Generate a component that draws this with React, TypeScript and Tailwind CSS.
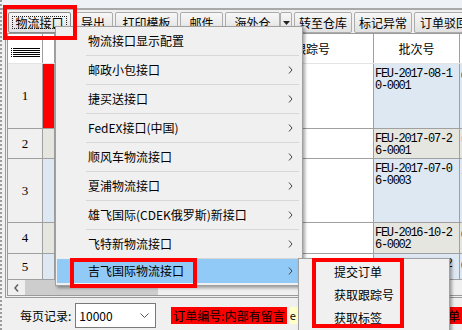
import React from "react";

const menuItems = [
  "物流接口显示配置",
  "邮政小包接口",
  "捷买送接口",
  "FedEX接口(中国)",
  "顺风车物流接口",
  "夏浦物流接口",
  "雄飞国际(CDEK俄罗斯)新接口",
  "飞特新物流接口",
  "吉飞国际物流接口",
];

const rows = [
  { n: 1, h: "h-[65px]", flag: "bg-[#ff0000]", tint: "bg-[#dde8f3]", batch: "FEU-2017-08-10-0001", extra: "0" },
  { n: 2, h: "h-[30px]", flag: "bg-[#e6e6e0]", tint: "bg-[#e6e6e0]", batch: "FEU-2017-07-26-0001", extra: "中" },
  { n: 3, h: "h-[64px]", flag: "bg-[#dde8f3]", tint: "bg-[#dde8f3]", batch: "FEU-2017-07-06-0003", extra: "1" },
  { n: 4, h: "h-[31px]", flag: "bg-[#e6e6e0]", tint: "bg-[#e6e6e0]", batch: "FEU-2016-10-26-0002", extra: "0" },
  { n: 5, h: "h-[26px]", flag: "bg-[#dde8f3]", tint: "bg-[#dde8f3]", batch: "FEU-2016-09-22-0001", extra: "0" },
];

function ChevronRight() {
  return (
    <svg width="5" height="8" viewBox="0 0 5 8" className="shrink-0">
      <path d="M1 0.5L4 4L1 7.5" stroke="#444" fill="none" strokeWidth="1" />
    </svg>
  );
}

function Btn({ w, children, focus }: { w: string; children: React.ReactNode; focus?: boolean }) {
  return (
    <div
      className={`${w} h-[21px] shrink-0 rounded-[2px] border ${
        focus ? "border-[#8a8a8a] p-[3px]" : "border-[#acacac]"
      } bg-linear-to-b from-[#f7f7f7] to-[#e1e1e1] flex items-center justify-center text-[12px] leading-none whitespace-nowrap overflow-hidden`}
    >
      {focus ? (
        <span className="flex-1 h-full border border-dotted border-[#222] flex items-center justify-center">
          {children}
        </span>
      ) : (
        children
      )}
    </div>
  );
}

function LinesIcon() {
  return (
    <svg width="31" height="10" viewBox="0 0 31 10">
      {[0.5, 2.5, 4.5, 6.5, 8.5].map((y) => (
        <g key={y}>
          <rect x="0" y={y - 0.5} width="1" height="1" fill="#000" />
          <line x1="2" y1={y} x2="29" y2={y} stroke="#000" strokeWidth="1" />
        </g>
      ))}
    </svg>
  );
}

export default function App() {
  return (
    <div className="relative w-[462px] h-[330px] overflow-hidden bg-[#f0f0f0] border-l-2 border-dotted border-[#9c9c9c] font-['Noto_Sans_CJK_SC','Noto_Sans',sans-serif] text-black">
      {/* top strip */}
      <div className="h-[10px] border-b-2 border-[#a9a9a9] bg-[#eef1f6]" />

      {/* toolbar */}
      <div className="h-[23px] flex items-start pt-[2px] pl-[6px] gap-[2px]">
        <Btn w="w-[63px]" focus>
          物流接口
        </Btn>
        <Btn w="w-[40px]">导出</Btn>
        <Btn w="w-[63px]">打印模板</Btn>
        <Btn w="w-[43px]">邮件</Btn>
        <div className="flex">
          <Btn w="w-[55px]">海外仓</Btn>
          <Btn w="w-[12px]">
            <svg width="7" height="4" viewBox="0 0 7 4">
              <path d="M0 0H7L3.5 4Z" fill="#222" />
            </svg>
          </Btn>
        </div>
        <Btn w="w-[58px]">转至仓库</Btn>
        <Btn w="w-[58px]">标记异常</Btn>
        <Btn w="w-[60px]">订单驳回</Btn>
      </div>

      {/* table frame */}
      <div className="ml-[3px] border-l-[3px] border-b-[3px] border-t border-double border-[#9a9a9a] overflow-hidden">
        {/* header */}
        <div className="flex h-[30px] border-b border-[#e4e4e4] bg-white text-[12px] leading-none">
          <div className="w-[35px] shrink-0 border-r border-[#a0a0a0] pl-[3px] pt-[14px]">
            <LinesIcon />
          </div>
          <div className="w-[12px] shrink-0 border-r border-[#a0a0a0]" />
          <div className="w-[196px] shrink-0 border-r border-[#a0a0a0]" />
          <div className="w-[123px] shrink-0 border-r border-[#a0a0a0] flex items-center justify-center">
            跟踪号
          </div>
          <div className="w-[86px] shrink-0 border-r border-[#a0a0a0] flex items-center justify-center">
            批次号
          </div>
          <div className="w-[40px] shrink-0" />
        </div>

        {rows.map((r) => (
          <div key={r.n} className={`flex ${r.h} border-b border-[#a0a0a0]`}>
            <div className="w-[35px] shrink-0 border-r border-[#a0a0a0] flex items-center justify-center font-['Liberation_Serif',serif] text-[13px]">
              {r.n}
            </div>
            <div className={`w-[12px] shrink-0 border-r border-[#a0a0a0] ${r.flag}`} />
            <div className="w-[196px] shrink-0 border-r border-[#a0a0a0] bg-white" />
            <div className="w-[123px] shrink-0 border-r border-[#a0a0a0] bg-white" />
            <div
              className={`w-[86px] shrink-0 border-r border-[#a0a0a0] ${r.tint} pl-[1px] pr-[3px] pt-[4px] font-['Liberation_Mono',monospace] text-[12px] tracking-[-1.3px] leading-[12px] break-all overflow-hidden`}
            >
              {r.batch}
            </div>
            <div className={`w-[40px] shrink-0 ${r.tint} pl-[1px] pt-[4px] text-[11px] leading-[12px]`}>{r.extra}</div>
          </div>
        ))}

        {/* horizontal scrollbar */}
        <div className="flex h-[15px] items-stretch bg-[#f0f0f0]">
          <div className="w-[17px] shrink-0 flex items-center justify-center">
            <svg width="5" height="8" viewBox="0 0 5 8">
              <path d="M4 0.5L1 4L4 7.5" stroke="#606060" fill="none" strokeWidth="1.5" />
            </svg>
          </div>
          <div className="w-[133px] shrink-0 bg-[#cdcdcd]" />
        </div>
      </div>

      {/* bottom bar */}
      <div className="h-[32px] flex items-center pt-[3px] pl-[18px] text-[12px] leading-none">
        <span>每页记录:</span>
        <div className="ml-[4px] w-[81px] h-[25px] shrink-0 border border-[#7a7a7a] bg-white flex items-center pl-[3px] pr-[6px]">
          <span className="flex-1">10000</span>
          <svg width="9" height="5" viewBox="0 0 9 5">
            <path d="M0.5 0.5L4.5 4.5L8.5 0.5" stroke="#555" fill="none" strokeWidth="1" />
          </svg>
        </div>
        <div className="ml-[15px] h-[17px] bg-[#ff0000] px-[2px] flex items-center whitespace-nowrap">
          订单编号:内部有留言
        </div>
        <div className="ml-[3px] h-[17px] w-[8px] bg-[#ffffc8] flex items-center text-[11px] overflow-hidden">e</div>
        <div className="ml-auto h-[17px] w-[14px] bg-[#ff0000] flex items-center overflow-hidden whitespace-nowrap">
          单
        </div>
      </div>

      {/* context menu */}
      <div className="absolute left-[53px] top-[26px] w-[248px] border border-[#a0a0a0] bg-[#f0f0f0] pb-[2px] shadow-[2px_2px_3px_rgba(0,0,0,0.35)] text-[12px] leading-none">
        {menuItems.map((t, i) => (
          <div key={t}>
            {i > 0 && <div className="ml-[30px] mr-[3px] h-px bg-[#d7d7d7]" />}
            <div
              className={`mx-[1px] flex items-center pl-[31px] pr-[8px] ${
                i === 8 ? "h-[24px] bg-[#91c9f7]" : "h-[28px]"
              }`}
            >
              <span className="flex-1 whitespace-nowrap">{t}</span>
              {i > 0 && <ChevronRight />}
            </div>
          </div>
        ))}
      </div>

      {/* submenu */}
      <div className="absolute left-[296px] top-[258px] w-[152px] h-[80px] border border-[#a0a0a0] bg-[#f0f0f0] pt-px shadow-[2px_2px_3px_rgba(0,0,0,0.35)] text-[12px] leading-none">
        {["提交订单", "获取跟踪号", "获取标签"].map((t) => (
          <div key={t} className="h-[23px] flex items-center pl-[35px]">
            {t}
          </div>
        ))}
      </div>

      {/* red annotation boxes */}
      <div className="absolute left-[1px] top-[5px] w-[74px] h-[35px] border-4 border-[#ff0000]" />
      <div className="absolute left-[68px] top-[258px] w-[127px] h-[30px] border-4 border-[#ff0000]" />
      <div className="absolute left-[310px] top-[258px] w-[92px] h-[70px] border-4 border-[#ff0000]" />
    </div>
  );
}
